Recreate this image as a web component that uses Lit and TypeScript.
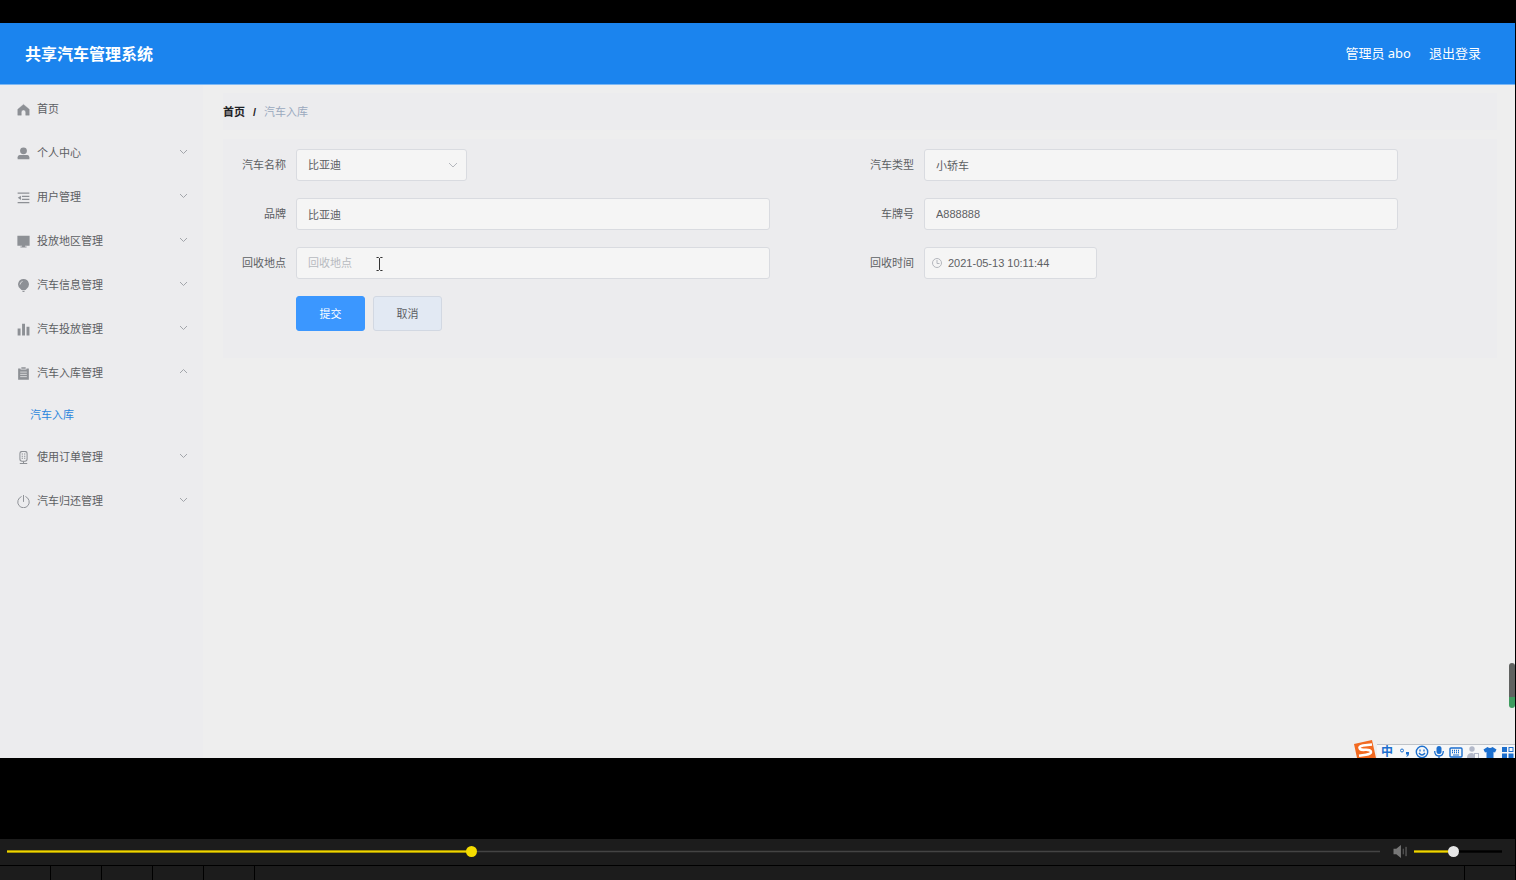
import { LitElement, html, css, svg } from "lit";
import { customElement, property, state } from "lit/decorators.js";
import { classMap } from "lit/directives/class-map.js";

const icons: Record<string, unknown> = {
  home: svg`<path d="M512 110 60 500V960h280V720a172 172 0 0 1 344 0v240h280V500z" fill="currentColor" stroke="currentColor" stroke-width="30" stroke-linejoin="round"/>`,
  user: svg`<circle cx="512" cy="300" r="270" fill="currentColor"/><path d="M50 970V800q0-150 150-170h624q150 20 150 170v170z" fill="currentColor"/>`,
  list: svg`<path d="M50 110h924v100H50zM390 370h584v100H390zM390 610h584v100H390zM50 860h924v100H50zM310 370v330L60 535z" fill="currentColor"/>`,
  monitor: svg`<path d="M30 60h964v780H30zM400 840h224v70h130v70H270v-70h130z" fill="currentColor"/>`,
  bulb: svg`<path d="M512 0a420 420 0 0 0-250 762q70 50 90 108h320q20-58 90-108A420 420 0 0 0 512 0zM400 920h224q-20 104-112 104T400 920z" fill="currentColor"/><path d="M240 440q10-190 200-250" fill="none" stroke="#ececee" stroke-width="60"/>`,
  bars: svg`<path d="M50 430h230v560H50zM400 60h230v930H400zM750 300h230v690H750z" fill="currentColor"/>`,
  clip: svg`<path d="M90 110h190v90h464v-90H190h744v900H90zM340 20h344v120H340z" fill="currentColor"/><path d="M250 400h524M250 580h524M250 760h524" stroke="#ececee" stroke-width="60"/>`,
  mic: svg`<rect x="230" y="30" width="564" height="770" rx="170" fill="none" stroke="currentColor" stroke-width="80"/><path d="M512 800v180M220 980h584M370 240h100M554 240h100M370 410h100M554 410h100M370 580h100M554 580h100" fill="none" stroke="currentColor" stroke-width="80"/>`,
  power: svg`<path d="M330 130a455 455 0 1 0 364 0M512 20v490" fill="none" stroke="currentColor" stroke-width="76" stroke-linecap="round"/>`,
};

interface Entry {
  icon: string;
  label: string;
  children?: string[];
}

const entries: Entry[] = [
  { icon: "home", label: "首页" },
  { icon: "user", label: "个人中心", children: [] },
  { icon: "list", label: "用户管理", children: [] },
  { icon: "monitor", label: "投放地区管理", children: [] },
  { icon: "bulb", label: "汽车信息管理", children: [] },
  { icon: "bars", label: "汽车投放管理", children: [] },
  { icon: "clip", label: "汽车入库管理", children: ["汽车入库"] },
  { icon: "mic", label: "使用订单管理", children: [] },
  { icon: "power", label: "汽车归还管理", children: [] },
];

@customElement("side-menu")
class SideMenu extends LitElement {
  @state() open = "汽车入库管理";

  static styles = css`
    :host {
      display: block;
      flex: 0 0 203px;
      background: #ececee;
      padding-top: 2px;
      box-sizing: border-box;
    }
    ul {
      list-style: none;
      margin: 0;
      padding: 0;
    }
    .item {
      display: flex;
      align-items: center;
      width: 100%;
      height: 44px;
      border: 0;
      background: none;
      padding: 0 15px 0 17px;
      font: inherit;
      color: #5d6063;
      text-align: left;
      cursor: pointer;
    }
    .icon {
      width: 13px;
      height: 13px;
      margin-right: 7px;
      color: #8d9095;
    }
    .label {
      flex: 1;
    }
    .chevron {
      width: 9px;
      height: 9px;
      margin-bottom: 4px;
      fill: none;
      stroke: #a2a5aa;
    }
    .up {
      transform: rotate(180deg);
    }
    .child {
      display: flex;
      align-items: center;
      height: 40px;
      padding-left: 30px;
      color: #2b86dd;
      text-decoration: none;
    }
  `;

  render() {
    return html`<nav>
      <ul>
        ${entries.map(
          (e) => html`<li>
            <button class="item" @click=${() => (this.open = this.open === e.label ? "" : e.label)}>
              <svg class="icon" viewBox="0 0 1024 1024" aria-hidden="true">${icons[e.icon]}</svg>
              <span class="label">${e.label}</span>
              ${e.children
                ? html`<svg class=${classMap({ chevron: true, up: this.open === e.label })} viewBox="0 0 9 9" aria-hidden="true">
                    <path d="M1 3l3.500 3.500L8 3" />
                  </svg>`
                : ""}
            </button>
            ${this.open === e.label ? e.children?.map((c) => html`<a class="child" href="#">${c}</a>`) : ""}
          </li>`
        )}
      </ul>
    </nav>`;
  }
}

@customElement("storage-form")
class StorageForm extends LitElement {
  static styles = css`
    :host {
      display: block;
      flex: 1;
      padding: 8px 18px 0 20px;
    }
    .crumbs {
      display: flex;
      align-items: center;
      height: 37px;
      margin-bottom: 9px;
      background: #ececee;
      color: #1f2226;
      font-weight: 700;
    }
    .crumbs a {
      color: inherit;
      text-decoration: none;
    }
    .slash {
      margin: 0 8px;
    }
    .current {
      color: #9aa9be;
      font-weight: 400;
    }
    form {
      display: grid;
      grid-template-columns: 1fr 1fr;
      row-gap: 17px;
      padding: 10px 18px 27px 0;
      background: #ececee;
    }
    .field {
      display: flex;
      align-items: center;
    }
    label {
      width: 63px;
      margin-right: 10px;
      text-align: right;
      color: #5d6063;
    }
    .box {
      display: flex;
      position: relative;
      width: calc(100% - 154px);
    }
    .select {
      width: 171px;
    }
    .date {
      width: 173px;
    }
    input,
    select {
      width: 100%;
      height: 32px;
      box-sizing: border-box;
      border: 1px solid #d9dbe0;
      border-radius: 3px;
      background: #f5f5f5;
      padding: 0 11px;
      font: inherit;
      color: #5d6063;
      appearance: none;
      outline: 0;
    }
    input::placeholder {
      color: #b7babf;
      opacity: 1;
    }
    .date input {
      padding-left: 23px;
    }
    .mark {
      position: absolute;
      top: 11px;
      width: 10px;
      height: 10px;
      fill: none;
      stroke: #b4b7bd;
      pointer-events: none;
    }
    .down {
      right: 9px;
    }
    .clock {
      left: 8px;
    }
    .pointer {
      position: absolute;
      left: 80px;
      top: 10px;
      width: 7px;
      height: 14px;
      fill: none;
      stroke: #333;
      pointer-events: none;
    }
    .actions {
      grid-column: 1 / -1;
      display: flex;
      gap: 8px;
      padding-left: 73px;
    }
    .button {
      width: 69px;
      height: 35px;
      padding: 0;
      border: 1px solid #d2d8e2;
      border-radius: 3px;
      background: #e2e9f3;
      color: #5d6063;
      font: inherit;
    }
    .primary {
      border-color: #3b97ff;
      background: #3b97ff;
      color: #fff;
    }
  `;

  render() {
    return html`
      <nav class="crumbs">
        <a href="#">首页</a><span class="slash">/</span><span class="current">汽车入库</span>
      </nav>
      <form @submit=${(e: Event) => e.preventDefault()}>
        <div class="field">
          <label for="name">汽车名称</label>
          <div class="box select">
            <select id="name"><option>比亚迪</option></select>
            <svg class="mark down" viewBox="0 0 10 10" aria-hidden="true"><path d="M1 3l4 4 4-4" /></svg>
          </div>
        </div>
        <div class="field">
          <label for="kind">汽车类型</label>
          <div class="box"><input id="kind" value="小轿车" /></div>
        </div>
        <div class="field">
          <label for="brand">品牌</label>
          <div class="box"><input id="brand" value="比亚迪" /></div>
        </div>
        <div class="field">
          <label for="plate">车牌号</label>
          <div class="box"><input id="plate" value="A888888" /></div>
        </div>
        <div class="field">
          <label for="place">回收地点</label>
          <div class="box">
            <input id="place" placeholder="回收地点" />
            <svg class="pointer" viewBox="0 0 7 14" aria-hidden="true"><path d="M.5 .5h2l1 1 1-1h2M3.500 1.500v11M.5 13.500h2l1-1 1 1h2" /></svg>
          </div>
        </div>
        <div class="field">
          <label for="time">回收时间</label>
          <div class="box date">
            <input id="time" value="2021-05-13 10:11:44" />
            <svg class="mark clock" viewBox="0 0 10 10" aria-hidden="true"><circle cx="5" cy="5" r="4.500" /><path d="M5 2v3.500h2.500" /></svg>
          </div>
        </div>
        <div class="actions">
          <button class="button primary" type="submit">提交</button>
          <button class="button" type="button">取消</button>
        </div>
      </form>
    `;
  }
}

@customElement("input-tray")
class InputTray extends LitElement {
  static styles = css`
    :host {
      display: flex;
      position: absolute;
      right: 0;
      bottom: 0;
      height: 18px;
      overflow: hidden;
      color: #1c6fce;
    }
    .logo {
      width: 24px;
      height: 18px;
    }
    .tools {
      display: flex;
      align-items: center;
      gap: 3px;
      box-sizing: border-box;
      height: 14px;
      margin-top: 4px;
      padding: 1px 1px 0 2px;
      border-top: 1px solid #bfc3c8;
      background: #f6f7f8;
    }
    .mode {
      width: 16px;
      font-size: 12px;
      line-height: 12px;
      font-weight: 700;
      text-align: center;
    }
    .tool {
      width: 14px;
      height: 14px;
      overflow: visible;
      fill: none;
      stroke: currentColor;
    }
    .muted {
      color: #b3b9c9;
    }
    .solid {
      fill: currentColor;
      stroke: none;
    }
  `;

  render() {
    return html`
      <svg class="logo" viewBox="0 0 24 18" aria-hidden="true">
        <path d="M1 4 19 0l4 18H4z" fill="#f26a21" />
        <path d="M19 4.500 10 5.500q-5 1-3 3.500 1 1 5 .8 6-.3 6 2.200 0 2-5 2.700l-7 1" fill="none" stroke="#fff" stroke-width="2.600" />
      </svg>
      <div class="tools">
        <span class="mode">中</span>
        <svg class="tool" viewBox="0 0 14 14"><circle cx="4" cy="5.500" r="1.500" /><path d="M8 7h3v2q0 2-2.500 3v-1q1-.6 1-1.500H8z" class="solid" /></svg>
        <svg class="tool" viewBox="0 0 14 14"><circle cx="7" cy="7" r="5.700" stroke-width="1.400" /><path d="M5 4.500v2M9 4.500v2M4 8q3 4 6 0" stroke-width="1.300" /></svg>
        <svg class="tool" viewBox="0 0 14 14"><rect x="4.500" y="1" width="5" height="8" rx="2.500" class="solid" /><path d="M2.700 6q0 5 4.300 5t4.300-5M7 11v3" stroke-width="1.300" /></svg>
        <svg class="tool" viewBox="0 0 14 14"><rect x="1" y="3" width="12" height="9" rx="1" stroke-width="1.400" /><path d="M3 5.500h8M3 7.500h8" stroke-dasharray="1 1" stroke-width="1.300" /><path d="M4 10h6" /></svg>
        <svg class="tool muted" viewBox="0 0 14 14"><g class="solid"><circle cx="6" cy="4" r="2.700" /><path d="M1 13q0-5 5-5 2 0 2 2v3z" /></g><rect x="8.500" y="8.500" width="4" height="5" /></svg>
        <svg class="tool" viewBox="0 0 14 14"><path class="solid" d="M4.500 2q2.500 2 5 0L13.500 4.500 12 7.500l-1.500-.5v7h-7V7L2 7.500.5 4.500z" /></svg>
        <svg class="tool" viewBox="0 0 14 14"><path class="solid" d="M2 2h5v5H2zM2 8.500h5v5H2zM8.500 8.500h5v5h-5z" /><rect x="9" y="2.500" width="4" height="4" /></svg>
      </div>
    `;
  }
}

@customElement("seek-bar")
class SeekBar extends LitElement {
  @property() label = "";
  @property({ type: Number }) value = 0;

  static styles = css`
    :host {
      display: block;
      --knob: #f5dc00;
      --rest: #444;
      --edge: #262626;
    }
    input {
      display: block;
      appearance: none;
      width: 100%;
      height: 11px;
      margin: 0;
      background:
        linear-gradient(90deg, #f0d500 var(--fill), var(--rest) var(--fill)) center / 100% 1px no-repeat,
        linear-gradient(90deg, #a39100 var(--fill), var(--edge) var(--fill)) center / 100% 3px no-repeat;
    }
    input::-webkit-slider-thumb {
      appearance: none;
      width: 11px;
      height: 11px;
      border-radius: 50%;
      background: var(--knob);
    }
  `;

  render() {
    return html`<input
      type="range"
      min="0"
      max="1000"
      aria-label=${this.label}
      .value=${String(this.value)}
      style="--fill: ${this.value / 10}%"
      @input=${(e: Event) => (this.value = Number((e.target as HTMLInputElement).value))}
    />`;
  }
}

@customElement("app-root")
class AppRoot extends LitElement {
  static styles = css`
    :host {
      display: flex;
      flex-direction: column;
      min-height: 100vh;
      box-sizing: border-box;
      padding: 23px 1px 0 0;
      background: #000;
      font: 11px/16px "Liberation Sans", "Noto Sans CJK SC", sans-serif;
    }
    .screen {
      flex: 1;
      display: flex;
      flex-direction: column;
      position: relative;
      margin-bottom: 81px;
      background: #eee;
      overflow: hidden;
    }
    header {
      display: flex;
      align-items: center;
      justify-content: space-between;
      height: 61px;
      padding: 0 34px 0 25px;
      background: #1b84ee;
      border-bottom: 1px solid #7db8f4;
      color: #fff;
      font-family: "Noto Sans", "Noto Sans CJK SC", sans-serif;
    }
    h1 {
      margin: 0;
      font-size: 16px;
      line-height: 24px;
    }
    .account {
      display: flex;
      gap: 18px;
      padding-bottom: 2px;
      font-size: 13px;
    }
    .account a {
      color: inherit;
      text-decoration: none;
    }
    .body {
      flex: 1;
      display: flex;
    }
    .gauge {
      position: absolute;
      right: 0;
      bottom: 50px;
      width: 6px;
      height: 45px;
      border-radius: 3px;
      background: linear-gradient(#606260 75%, #3f9b5f 75%);
    }
    .player {
      display: flex;
      align-items: center;
      box-sizing: border-box;
      height: 26px;
      padding: 0 13px 1px 7px;
      background: #1c1c1c;
    }
    .progress {
      flex: 1;
    }
    .speaker {
      width: 16px;
      height: 13px;
      margin: 0 6px 0 12px;
    }
    .volume {
      width: 88px;
      --knob: #e6e6e6;
      --rest: #000;
      --edge: #080808;
    }
    .strip {
      display: flex;
      height: 14px;
      margin-top: 1px;
      gap: 1px;
    }
    .slot {
      width: 50px;
      background: #1c1c1c;
    }
    .wide {
      flex: 1;
    }
  `;

  render() {
    return html`
      <div class="screen">
        <header>
          <h1>共享汽车管理系统</h1>
          <div class="account"><span>管理员 abo</span><a href="#">退出登录</a></div>
        </header>
        <div class="body">
          <side-menu></side-menu>
          <storage-form></storage-form>
        </div>
        <div class="gauge"></div>
        <input-tray></input-tray>
      </div>
      <div class="player">
        <seek-bar class="progress" label="播放进度" .value=${337}></seek-bar>
        <svg class="speaker" viewBox="0 0 16 14" aria-hidden="true">
          <path d="M1 4h3l5-4v14l-5-4H1z" fill="#777" />
          <path d="M11.500 4v6" stroke="#666" />
          <path d="M14.500 2v10" stroke="#777" />
        </svg>
        <seek-bar class="volume" label="音量" .value=${440}></seek-bar>
      </div>
      <div class="strip">
        ${[0, 1, 2, 3, 4].map(() => html`<div class="slot"></div>`)}
        <div class="slot wide"></div>
        <div class="slot"></div>
      </div>
    `;
  }
}
